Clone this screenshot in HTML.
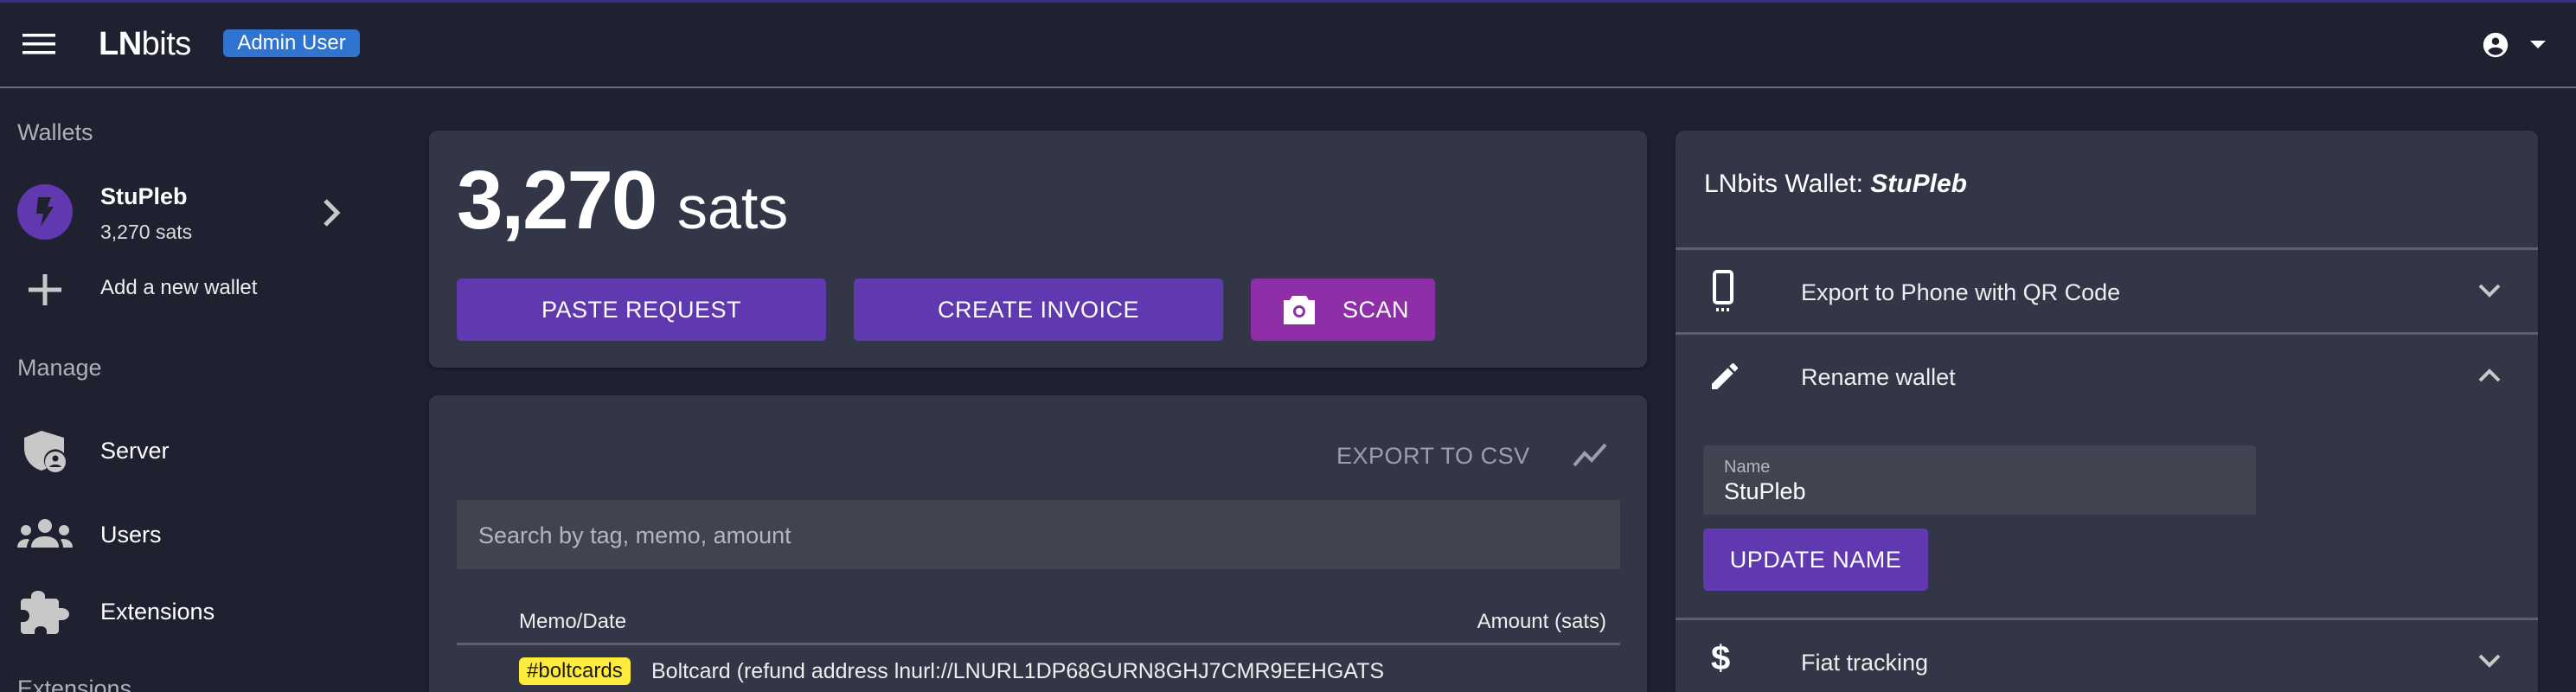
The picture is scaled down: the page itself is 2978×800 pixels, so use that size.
<!DOCTYPE html>
<html style="width:2978px;height:800px;overflow:hidden"><head><meta charset="utf-8"><style>
*{margin:0;padding:0;box-sizing:border-box}
body{width:2978px;height:800px;overflow:hidden;background:#1f2030;font-family:"Liberation Sans",Arial,sans-serif;color:#fff;position:relative}
.a{position:absolute;white-space:nowrap}
.card{position:absolute;background:#333646;border-radius:10px;box-shadow:0 2px 4px rgba(0,0,0,.3)}
.btn{position:absolute;background:#6039b0;border-radius:5px;color:#fff;font-size:27px;display:flex;align-items:center;justify-content:center;letter-spacing:.5px}
.sep{position:absolute;height:3px;background:#5c5f6e}
.mi{fill:#c8c8c8}
</style></head><body>
<div class="a" style="left:0;top:0;width:2978px;height:3px;background:#3a2f7a"></div>
<svg class="a" style="left:26px;top:36px" width="40" height="30" viewBox="0 0 40 30"><rect x="0" y="3" width="38" height="3.5" fill="#fff"/><rect x="0" y="13" width="38" height="3.5" fill="#fff"/><rect x="0" y="23" width="38" height="3.5" fill="#fff"/></svg>
<div class="a" style="left:114px;top:30px;font-size:38px;font-weight:bold;letter-spacing:-0.5px">LN<span style="font-weight:normal">bits</span></div>
<div class="a" style="left:258px;top:34px;width:158px;height:32px;background:#2f74d0;border-radius:6px;font-size:24px;line-height:32px;text-align:center">Admin User</div>
<svg class="a" style="left:2868px;top:35px" width="34" height="34" viewBox="0 0 24 24"><path fill="#fff" d="M12 2C6.48 2 2 6.48 2 12s4.48 10 10 10 10-4.48 10-10S17.52 2 12 2zm0 4a3 3 0 110 6 3 3 0 010-6zm0 14.2a7.2 7.2 0 01-6-3.22c.03-1.99 4-3.08 6-3.08s5.97 1.09 6 3.08a7.2 7.2 0 01-6 3.22z"/></svg>
<svg class="a" style="left:2925px;top:47px" width="20" height="10" viewBox="0 0 20 10"><path d="M0 0h18l-9 9z" fill="#fff"/></svg>
<div class="sep" style="left:0;top:100px;width:2978px;height:2px;background:#6a6c78"></div>

<div class="a" style="left:20px;top:138px;font-size:27px;color:#b0b0b6">Wallets</div>
<div class="a" style="left:20px;top:213px;width:64px;height:64px;border-radius:50%;background:#6039b0"></div>
<svg class="a" style="left:38px;top:228px" width="26" height="34" viewBox="0 0 26 34"><path d="M6 0h15l-4 11h7L9 34l3-15H4z" fill="#1f2030"/></svg>
<div class="a" style="left:116px;top:212px;font-size:27px;font-weight:bold">StuPleb</div>
<div class="a" style="left:116px;top:255px;font-size:23px;color:#ddd">3,270 sats</div>
<svg class="a" style="left:372px;top:229px" width="24" height="34" viewBox="0 0 24 34"><path d="M4 3l14 14L4 31" stroke="#c8c8c8" stroke-width="5" fill="none"/></svg>
<svg class="a" style="left:32px;top:315px" width="40" height="40" viewBox="0 0 40 40"><rect x="17.5" y="2" width="5" height="36" fill="#c8c8c8"/><rect x="1" y="17.5" width="38" height="5" fill="#c8c8c8"/></svg>
<div class="a" style="left:116px;top:319px;font-size:24px;color:#eee">Add a new wallet</div>
<div class="a" style="left:20px;top:410px;font-size:27px;color:#b0b0b6">Manage</div>
<svg class="a" style="left:26px;top:498px" width="52" height="48" viewBox="0 0 52 48"><path class="mi" d="M22 0L2 8v12c0 13 9 23 20 26 2-1 4-1 6-3a13 13 0 0 1 20-17V8z"/><circle cx="38" cy="36" r="12" class="mi"/><circle cx="38" cy="32" r="3.5" fill="#1f2030"/><path d="M31 42c2-4 12-4 14 0z" fill="#1f2030"/></svg>
<div class="a" style="left:116px;top:506px;font-size:27px">Server</div>
<svg class="a" style="left:20px;top:599px" width="64" height="34" viewBox="0 0 64 34"><circle cx="32" cy="9" r="8" class="mi"/><circle cx="10" cy="14" r="6" class="mi"/><circle cx="54" cy="14" r="6" class="mi"/><path class="mi" d="M16 34c0-9 7-13 16-13s16 4 16 13z"/><path class="mi" d="M0 34c0-6 4-10 12-10l2 1c-2 3-3 6-3 9z"/><path class="mi" d="M64 34c0-6-4-10-12-10l-2 1c2 3 3 6 3 9z"/></svg>
<div class="a" style="left:116px;top:603px;font-size:27px">Users</div>
<svg class="a" style="left:24px;top:683px" width="58" height="50" viewBox="0 0 58 50"><path class="mi" d="M20 0c5 0 8 3 8 6v3h12c2 0 4 2 4 4v7h3c5 0 9 3 9 7s-4 7-9 7h-3v12c0 2-2 4-4 4H30v-3c0-4-3-6-7-6s-7 2-7 6v3H4c-2 0-4-2-4-4V36h3c4 0 7-3 7-7s-3-7-7-7H0V13c0-2 2-4 4-4h8V6c0-3 3-6 8-6z"/></svg>
<div class="a" style="left:116px;top:692px;font-size:27px">Extensions</div>
<div class="a" style="left:20px;top:781px;font-size:27px;color:#b0b0b6">Extensions</div>

<div class="card" style="left:496px;top:151px;width:1408px;height:274px"></div>
<div class="a" style="left:528px;top:177px;font-size:96px;font-weight:bold;letter-spacing:-2px">3,270 <span style="font-size:70px;font-weight:normal;letter-spacing:0">sats</span></div>
<div class="btn" style="left:528px;top:322px;width:427px;height:72px">PASTE REQUEST</div>
<div class="btn" style="left:987px;top:322px;width:427px;height:72px">CREATE INVOICE</div>
<div class="btn" style="left:1446px;top:322px;width:213px;height:72px;background:#8e2fa8;justify-content:flex-start;padding-left:36px">
<svg width="40" height="36" viewBox="0 0 40 36" style="margin-right:30px"><path d="M12 2h16l3 5h7v28H2V7h7z" fill="#fff"/><circle cx="20" cy="20" r="7" fill="#8e2fa8"/><circle cx="20" cy="20" r="4" fill="#fff"/></svg>SCAN</div>

<div class="card" style="left:496px;top:457px;width:1408px;height:343px;border-radius:10px 10px 0 0"></div>
<div class="a" style="left:1545px;top:512px;font-size:27px;color:#9c9ea8;letter-spacing:.5px">EXPORT TO CSV</div>
<svg class="a" style="left:1818px;top:508px" width="42" height="36" viewBox="0 0 42 36"><path d="M2 30L14 16l8 8L38 6" stroke="#9c9ea8" stroke-width="4" fill="none"/></svg>
<div class="a" style="left:528px;top:578px;width:1345px;height:80px;background:#404350"></div>
<div class="a" style="left:553px;top:604px;font-size:27px;color:#b4b5bd">Search by tag, memo, amount</div>
<div class="a" style="left:600px;top:705px;font-size:24px;color:#eee">Memo/Date</div>
<div class="a" style="left:1697px;top:705px;font-size:24px;color:#eee;width:160px;text-align:right">Amount (sats)</div>
<div class="sep" style="left:528px;top:743px;width:1345px"></div>
<div class="a" style="left:600px;top:760px;height:32px;padding:0 9px;background:#ffeb3b;color:#1a1a1a;border-radius:6px;font-size:24px;line-height:32px">#boltcards</div>
<div class="a" style="left:753px;top:762px;font-size:25px;color:#eee">Boltcard (refund address lnurl://LNURL1DP68GURN8GHJ7CMR9EEHGATS</div>

<div class="card" style="left:1937px;top:151px;width:997px;height:649px;border-radius:10px 10px 0 0"></div>
<div class="a" style="left:1970px;top:196px;font-size:30px">LNbits Wallet: <b><i>StuPleb</i></b></div>
<div class="sep" style="left:1937px;top:286px;width:997px"></div>
<svg class="a" style="left:1979px;top:312px" width="28" height="50" viewBox="0 0 28 50"><rect x="3" y="2" width="20" height="36" rx="3" fill="none" stroke="#fff" stroke-width="4"/><rect x="5" y="44" width="3" height="4" fill="#fff"/><rect x="11" y="44" width="3" height="4" fill="#fff"/><rect x="17" y="44" width="3" height="4" fill="#fff"/></svg>
<div class="a" style="left:2082px;top:323px;font-size:27px;color:#eee">Export to Phone with QR Code</div>
<svg class="a" style="left:2864px;top:326px" width="28" height="20" viewBox="0 0 28 20"><path d="M3 4l11 11L25 4" stroke="#c8c8c8" stroke-width="4" fill="none"/></svg>
<div class="sep" style="left:1937px;top:384px;width:997px"></div>
<svg class="a" style="left:1974px;top:415px" width="40" height="40" viewBox="0 0 24 24"><path fill="#fff" d="M3 17.25V21h3.75L17.81 9.94l-3.75-3.75L3 17.25zM20.71 7.04a1 1 0 000-1.41l-2.34-2.34a1 1 0 00-1.41 0l-1.83 1.83 3.75 3.75 1.83-1.83z"/></svg>
<div class="a" style="left:2082px;top:421px;font-size:27px;color:#eee">Rename wallet</div>
<svg class="a" style="left:2864px;top:424px" width="28" height="20" viewBox="0 0 28 20"><path d="M3 16L14 5l11 11" stroke="#c8c8c8" stroke-width="4" fill="none"/></svg>
<div class="a" style="left:1969px;top:515px;width:639px;height:80px;background:#404350;border-radius:4px 4px 0 0"></div>
<div class="a" style="left:1993px;top:529px;font-size:20px;color:#b4b5bd">Name</div>
<div class="a" style="left:1993px;top:553px;font-size:27px;color:#fff">StuPleb</div>
<div class="btn" style="left:1969px;top:611px;width:260px;height:72px">UPDATE NAME</div>
<div class="sep" style="left:1937px;top:714px;width:997px"></div>
<div class="a" style="left:1978px;top:739px;font-size:40px;font-weight:bold;color:#fff">$</div>
<div class="a" style="left:2082px;top:751px;font-size:27px;color:#eee">Fiat tracking</div>
<svg class="a" style="left:2864px;top:754px" width="28" height="20" viewBox="0 0 28 20"><path d="M3 4l11 11L25 4" stroke="#c8c8c8" stroke-width="4" fill="none"/></svg>
</body></html>
